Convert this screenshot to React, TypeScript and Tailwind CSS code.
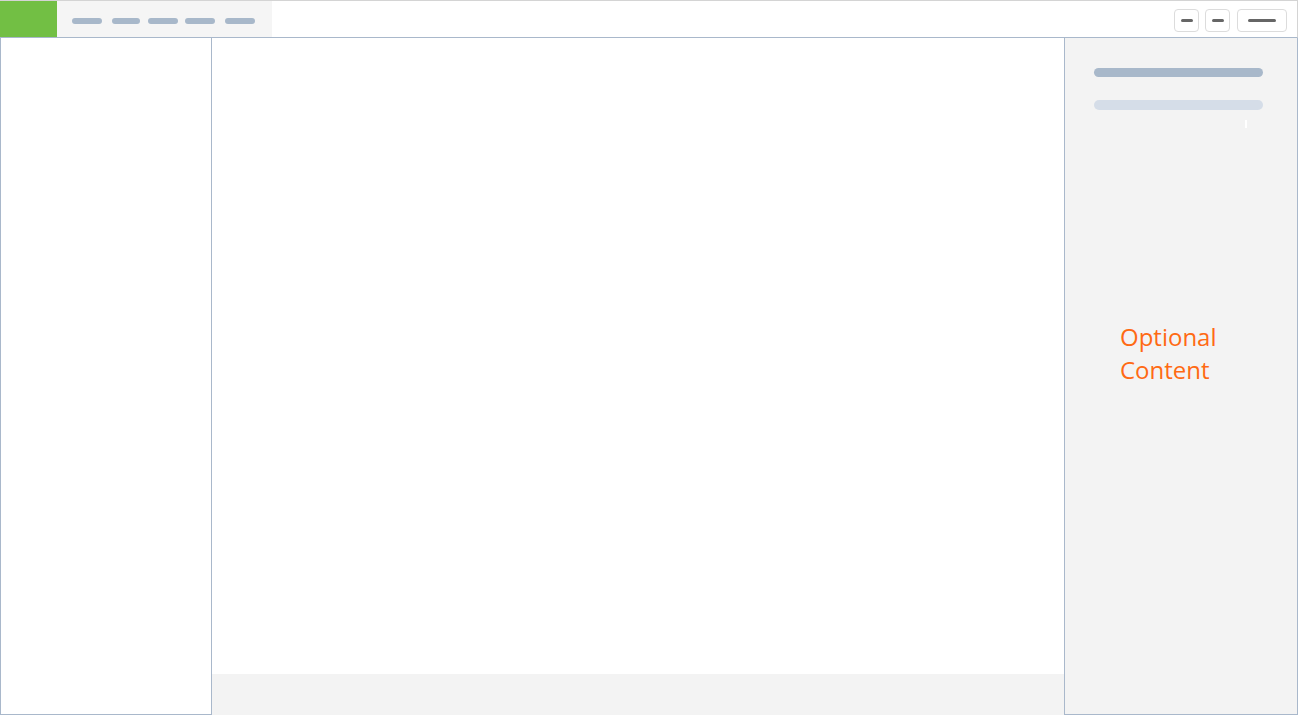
export default function App() {
  return (
    <div className="w-[1298px] h-[715px] flex flex-col bg-white overflow-hidden" style={{ fontFamily: '"Open Sans", sans-serif' }}>
      {/* Header */}
      <div className="h-[38px] flex items-stretch border-t border-r border-[#d4d4d4] border-b border-b-[#a9b8cb]">
        <div className="w-[57px] bg-[#72bf44]" />
        <div className="w-[215px] bg-[#f5f5f5] flex items-center pl-[15px] pt-[3px]">
          <span className="w-[30px] h-[6px] rounded-full bg-[#a8b8ca]" />
          <span className="w-[28px] h-[6px] rounded-full bg-[#a8b8ca] ml-[10px]" />
          <span className="w-[30px] h-[6px] rounded-full bg-[#a8b8ca] ml-[8px]" />
          <span className="w-[30px] h-[6px] rounded-full bg-[#a8b8ca] ml-[7px]" />
          <span className="w-[30px] h-[6px] rounded-full bg-[#a8b8ca] ml-[10px]" />
        </div>
        <div className="flex-1" />
        <div className="flex items-center gap-[6px] pr-[10px] pt-[3px]">
          <div className="w-[25px] h-[23px] rounded-[4px] border border-[#dcdcdc] flex items-center justify-center">
            <span className="w-[12px] h-[3px] rounded-full bg-[#666]" />
          </div>
          <div className="w-[25px] h-[23px] rounded-[4px] border border-[#dcdcdc] flex items-center justify-center">
            <span className="w-[12px] h-[3px] rounded-full bg-[#666]" />
          </div>
          <div className="w-[50px] h-[23px] rounded-[4px] border border-[#dcdcdc] flex items-center justify-center ml-[1px]">
            <span className="w-[28px] h-[3px] rounded-full bg-[#666]" />
          </div>
        </div>
      </div>

      {/* Body */}
      <div className="flex-1 flex">
        <div className="w-[212px] border-l border-r border-b border-[#a9b8cb] bg-white" />
        <div className="flex-1 flex flex-col">
          <div className="flex-1 bg-white" />
          <div className="h-[41px] bg-[#f3f3f3]" />
        </div>
        <div className="w-[234px] bg-[#f3f3f3] border-l border-r border-b border-[#a9b8cb] flex flex-col pl-[29px] pr-[34px] pt-[30px]">
          <div className="h-[9px] rounded-full bg-[#a8b8ca]" />
          <div className="h-[10px] rounded-full bg-[#d5dde8] mt-[23px]" />
          <div className="w-[2px] h-[8px] bg-white self-end mr-[16px] mt-[10px]" />
          <div className="mt-[192px] pl-[26px] text-[24px] leading-[33px] text-[#ff6a13]">
            Optional<br />Content
          </div>
        </div>
      </div>
    </div>
  )
}
